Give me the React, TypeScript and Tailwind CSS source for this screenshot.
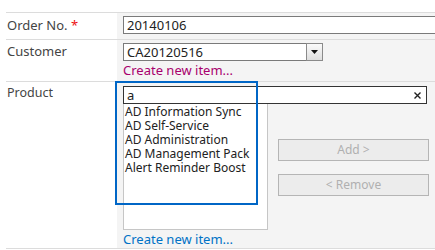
import React from "react";

export default function App() {
  const items = [
    "AD Information Sync",
    "AD Self-Service",
    "AD Administration",
    "AD Management Pack",
    "Alert Reminder Boost",
  ];
  return (
    <div
      className="relative w-[435px] h-[250px] bg-white overflow-hidden text-[12px] text-[#444444]"
      style={{ fontFamily: '"Noto Sans", "Open Sans", sans-serif' }}
    >
      <div className="pt-[12px] pl-[6px]">
        {/* Row 1 */}
        <div className="flex border-t border-[#dcdcdc] h-[27px]">
          <div className="w-[111px] pl-[1px] pt-[4px] leading-[17px] shrink-0 text-[13px]">
            Order No. <span className="text-[#e11]">*</span>
          </div>
          <div className="flex-1 bg-[#f4f4f4] pl-[6px] pt-[3px]">
            <div className="w-[400px] h-[18px] border border-[#7a7a7a] bg-white pl-[3px] leading-[16px] text-[13px] text-[#222]">
              20140106
            </div>
          </div>
        </div>
        {/* Row 2 */}
        <div className="flex border-t border-[#dcdcdc] h-[42px]">
          <div className="w-[111px] pl-[1px] pt-[3px] leading-[17px] shrink-0 text-[13px]">Customer</div>
          <div className="flex-1 bg-[#f4f4f4] pl-[6px] pt-[3px]">
            <div className="flex h-[18px] w-[200px]">
              <div className="flex-1 border border-[#7a7a7a] bg-white pl-[3px] leading-[16px] text-[13px] text-[#222]">
                CA20120516
              </div>
              <div className="w-[17px] -ml-px border border-[#8a8a8a] bg-gradient-to-b from-[#fafafa] to-[#dedede] flex items-center justify-center">
                <svg width="7" height="4" viewBox="0 0 7 4">
                  <path d="M0 0H7L3.5 4Z" fill="#111" />
                </svg>
              </div>
            </div>
            <div className="leading-[17px] text-[13px] text-[#a8006e] mt-[1px]">Create new item...</div>
          </div>
        </div>
        {/* Row 3 */}
        <div className="flex border-t border-b border-[#dcdcdc] h-[168px]">
          <div className="w-[111px] pl-[1px] pt-[2px] leading-[17px] shrink-0 text-[12.5px]">Product</div>
          <div className="flex-1 bg-[#f4f4f4] pl-[6px] pt-[4px]">
            <div className="relative w-[304px] h-[18px] border border-[#333] bg-white pl-[3px] leading-[16px] text-[13px] text-[#222]">
              a
              <svg className="absolute right-[5px] top-[5px]" width="7" height="7" viewBox="0 0 7 7">
                <path d="M0.5 0.5L6.5 6.5M6.5 0.5L0.5 6.5" stroke="#222" strokeWidth="1.4" />
              </svg>
            </div>
            <div className="flex">
              <div className="w-[145px] h-[126px] border border-t-0 border-[#c6c6c6] bg-white text-[#222] text-[12px] leading-[14px] pt-px overflow-hidden">
                {items.map((t) => (
                  <div key={t} className="h-[14px] pl-px whitespace-nowrap">
                    {t}
                  </div>
                ))}
              </div>
              <div className="ml-[10px] pt-[35px] flex flex-col gap-[13px]">
                <div className="w-[151px] h-[22px] border border-[#b5b5b5] bg-[#ececec] text-[#b0b0b0] text-[12px] flex items-center justify-center">
                  Add &gt;
                </div>
                <div className="w-[151px] h-[22px] border border-[#b5b5b5] bg-[#ececec] text-[#b0b0b0] text-[12px] flex items-center justify-center">
                  &lt; Remove
                </div>
              </div>
            </div>
            <div className="leading-[16px] text-[13px] text-[#0072c6] mt-px">Create new item...</div>
          </div>
        </div>
      </div>
      <div className="absolute left-[115px] top-[81px] w-[143px] h-[124px] border-2 border-[#0066c6]" />
    </div>
  );
}
